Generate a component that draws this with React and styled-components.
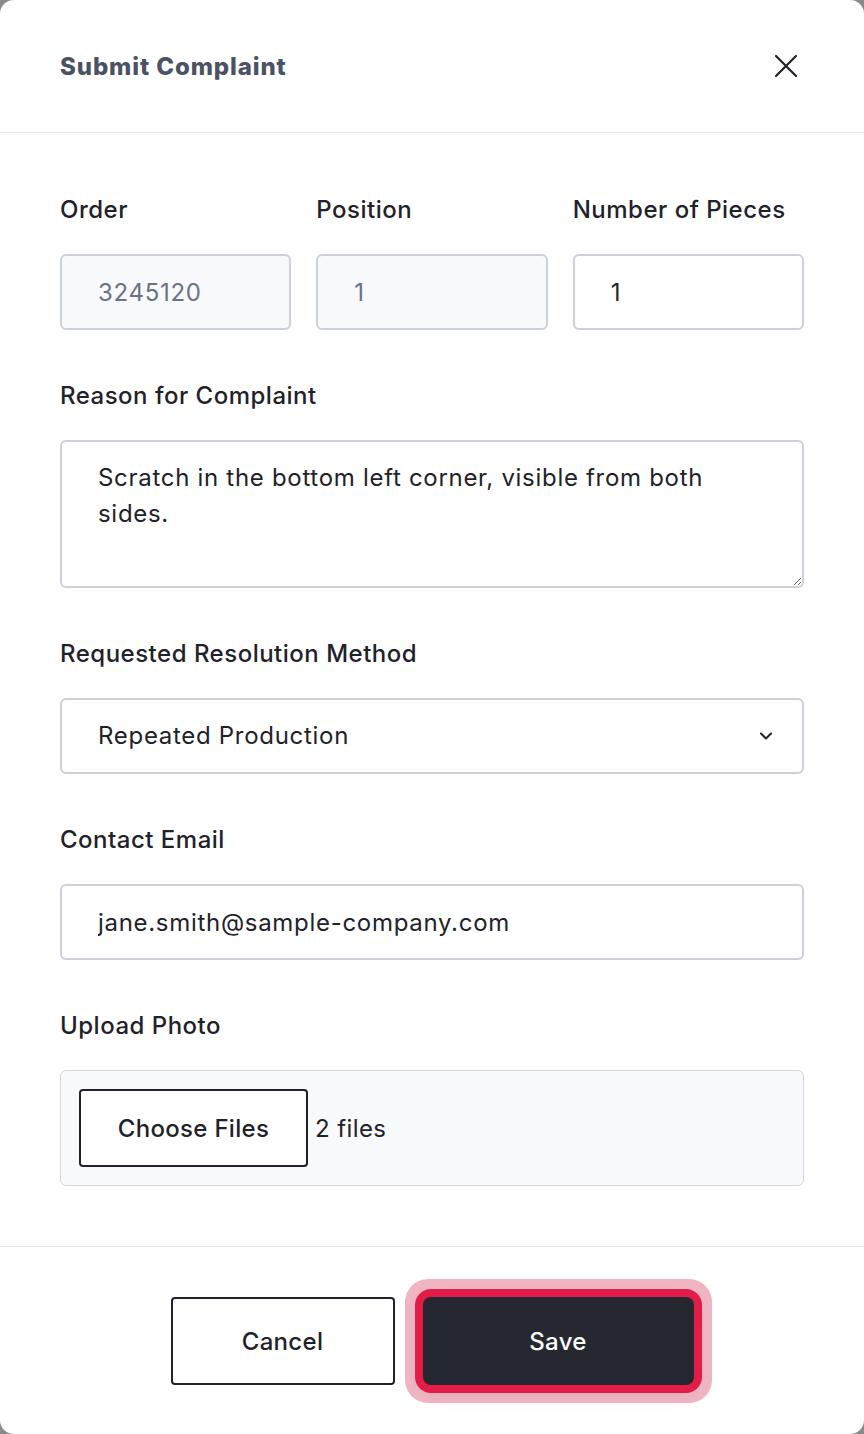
import React from 'react';
import styled, { createGlobalStyle } from 'styled-components';

const GlobalStyle = createGlobalStyle`
  html, body {
    margin: 0;
    padding: 0;
    background: #8a8a8a;
  }
  body {
    font-family: Inter, "Open Sans", "Liberation Sans", sans-serif;
    color: #1f2229;
  }
  * { box-sizing: border-box; }
`;

const Modal = styled.div`
  width: 864px;
  min-height: 1434px;
  background: #ffffff;
  border-radius: 14px;
  display: flex;
  flex-direction: column;
  overflow: hidden;
`;

const Header = styled.div`
  height: 133px;
  display: flex;
  align-items: center;
  justify-content: space-between;
  padding: 0 63px 0 60px;
  border-bottom: 1px solid #e6e8ec;
`;

const Title = styled.h1`
  margin: 0;
  font-size: 24px;
  font-weight: 800;
  color: #4a5264;
  letter-spacing: 0.9px;
`;

const CloseButton = styled.button`
  border: none;
  background: none;
  padding: 0;
  width: 30px;
  height: 30px;
  display: flex;
  align-items: center;
  justify-content: center;
  color: #1f2229;
  cursor: pointer;
`;

const Body = styled.div`
  flex: 1;
  display: flex;
  flex-direction: column;
  gap: 48px;
  padding: 59px 60px 60px;
`;

const Row = styled.div`
  display: grid;
  grid-template-columns: repeat(3, 1fr);
  gap: 25px;
`;

const Field = styled.div`
  display: flex;
  flex-direction: column;
  gap: 26px;
`;

const Label = styled.label`
  font-size: 24px;
  line-height: 36px;
  font-weight: 500;
  letter-spacing: 0.5px;
  color: #1f2229;
`;

const controlStyles = `
  width: 100%;
  font-family: inherit;
  font-size: 24px;
  line-height: 36px;
  letter-spacing: 0.7px;
  padding: 18px 36px;
  border: 2px solid #cbd0d9;
  border-radius: 6px;
  outline: none;
`;

const Input = styled.input`
  ${controlStyles}
  height: 76px;
  background: ${(p) => (p.disabled ? '#f8f9fa' : '#ffffff')};
  color: ${(p) => (p.disabled ? '#6a7285' : '#1f2229')};
`;

const TextArea = styled.textarea`
  ${controlStyles}
  height: 148px;
  resize: vertical;
  display: block;
  color: #1f2229;
`;

const SelectWrap = styled.div`
  position: relative;
`;

const Select = styled.select`
  ${controlStyles}
  height: 76px;
  appearance: none;
  background: #ffffff;
  color: #1f2229;
`;

const Chevron = styled.svg`
  position: absolute;
  right: 31px;
  top: 50%;
  transform: translateY(-50%);
  pointer-events: none;
`;

const FileBox = styled.div`
  display: flex;
  align-items: center;
  gap: 7px;
  padding: 18px 18px;
  height: 116px;
  background: #f8f9fa;
  border: 1.5px solid #d3d7de;
  border-radius: 6px;
`;

const FileButton = styled.button`
  width: 229px;
  height: 78px;
  background: #ffffff;
  border: 2px solid #1f2229;
  border-radius: 4px;
  font-family: inherit;
  font-size: 24px;
  font-weight: 500;
  letter-spacing: 0.3px;
  color: #1f2229;
`;

const FileCount = styled.span`
  font-size: 24px;
  letter-spacing: 0.4px;
  color: #1f2229;
`;

const Footer = styled.div`
  border-top: 1px solid #e6e8ec;
  padding: 50px 0 49px;
  display: flex;
  justify-content: center;
  gap: 28px;
`;

const Button = styled.button`
  height: 88px;
  width: ${(p) => (p.$primary ? '271px' : '224px')};
  font-family: inherit;
  font-size: 24px;
  font-weight: 500;
  letter-spacing: 0.3px;
  border-radius: ${(p) => (p.$primary ? '8px' : '4px')};
  border: ${(p) => (p.$primary ? 'none' : '2px solid #1f2229')};
  background: ${(p) => (p.$primary ? '#252830' : '#ffffff')};
  color: ${(p) => (p.$primary ? '#ffffff' : '#1f2229')};
  box-shadow: ${(p) => (p.$primary
    ? '0 0 0 8px #e11d48, 0 0 0 18px rgba(215, 60, 95, 0.38), 0 8px 24px rgba(0, 0, 0, 0.08)'
    : 'none')};
  cursor: pointer;
`;

export default function App() {
  return (
    <>
      <GlobalStyle />
      <Modal>
        <Header>
          <Title>Submit Complaint</Title>
          <CloseButton aria-label="Close">
            <svg width="24" height="24" viewBox="0 0 24 24" fill="none" stroke="currentColor" strokeWidth="2.2" strokeLinecap="round">
              <path d="M2 2L22 22M22 2L2 22" />
            </svg>
          </CloseButton>
        </Header>
        <Body>
          <Row>
            <Field>
              <Label>Order</Label>
              <Input disabled value="3245120" readOnly />
            </Field>
            <Field>
              <Label>Position</Label>
              <Input disabled value="1" readOnly />
            </Field>
            <Field>
              <Label>Number of Pieces</Label>
              <Input type="text" defaultValue="1" />
            </Field>
          </Row>
          <Field>
            <Label>Reason for Complaint</Label>
            <TextArea
              rows={3}
              defaultValue="Scratch in the bottom left corner, visible from both sides."
            />
          </Field>
          <Field>
            <Label>Requested Resolution Method</Label>
            <SelectWrap>
              <Select defaultValue="repeat">
                <option value="repeat">Repeated Production</option>
                <option value="refund">Refund</option>
                <option value="discount">Discount</option>
              </Select>
              <Chevron width="14" height="9" viewBox="0 0 14 9" fill="none" stroke="#1f2229" strokeWidth="2" strokeLinecap="round" strokeLinejoin="round">
                <path d="M2 2l5 5 5-5" />
              </Chevron>
            </SelectWrap>
          </Field>
          <Field>
            <Label>Contact Email</Label>
            <Input type="email" defaultValue="jane.smith@sample-company.com" />
          </Field>
          <Field>
            <Label>Upload Photo</Label>
            <FileBox>
              <FileButton type="button">Choose Files</FileButton>
              <FileCount>2 files</FileCount>
            </FileBox>
          </Field>
        </Body>
        <Footer>
          <Button type="button">Cancel</Button>
          <Button type="button" $primary>Save</Button>
        </Footer>
      </Modal>
    </>
  );
}
